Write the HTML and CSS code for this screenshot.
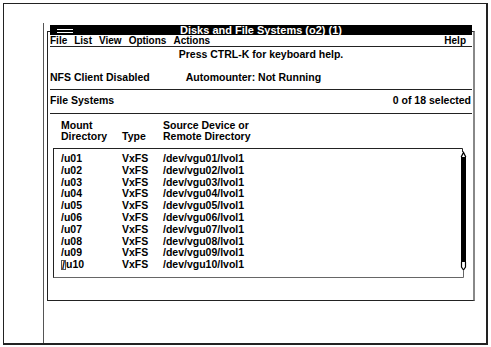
FILE: index.html
```html
<!DOCTYPE html>
<html lang="en">
<head>
  <meta charset="UTF-8">
  <title>Disks and File Systems</title>
  <link rel="stylesheet" href="styles.css">
</head>
<body>
  <div class="screen">
    <div class="panel">
      <div class="titlebar">
        <span class="sysmenu"></span>
        <span class="title">Disks and File Systems (o2) (1)</span>
      </div>
      <div class="window">
        <div class="menubar">
          <span>File</span>
          <span>List</span>
          <span>View</span>
          <span>Options</span>
          <span>Actions</span>
          <span class="menu-help">Help</span>
        </div>
        <div class="hint">Press CTRL-K for keyboard help.</div>
        <div class="status">
          <span>NFS Client Disabled</span>
          <span>Automounter: Not Running</span>
        </div>
        <div class="section-head">
          <span>File Systems</span>
          <span>0 of 18 selected</span>
        </div>
        <div class="columns">
          <span>Mount<br>Directory</span>
          <span class="col-bottom">Type</span>
          <span>Source Device or<br>Remote Directory</span>
        </div>
        <div class="listbox">
          <div class="rows">
            <div class="row"><span>/u01</span><span>VxFS</span><span>/dev/vgu01/lvol1</span></div>
            <div class="row"><span>/u02</span><span>VxFS</span><span>/dev/vgu02/lvol1</span></div>
            <div class="row"><span>/u03</span><span>VxFS</span><span>/dev/vgu03/lvol1</span></div>
            <div class="row"><span>/u04</span><span>VxFS</span><span>/dev/vgu04/lvol1</span></div>
            <div class="row"><span>/u05</span><span>VxFS</span><span>/dev/vgu05/lvol1</span></div>
            <div class="row"><span>/u06</span><span>VxFS</span><span>/dev/vgu06/lvol1</span></div>
            <div class="row"><span>/u07</span><span>VxFS</span><span>/dev/vgu07/lvol1</span></div>
            <div class="row"><span>/u08</span><span>VxFS</span><span>/dev/vgu08/lvol1</span></div>
            <div class="row"><span>/u09</span><span>VxFS</span><span>/dev/vgu09/lvol1</span></div>
            <div class="row"><span><span class="cursor">/</span>u10</span><span>VxFS</span><span>/dev/vgu10/lvol1</span></div>
          </div>
          <svg class="scrollbar" viewBox="0 0 8 130" width="8" height="130">
            <path d="M0 0.5 H2.5 V4" stroke="#222" fill="none"/>
            <path d="M1.2 9 L3.5 4.5 L5.8 9" stroke="#000" stroke-width="1.3" fill="none"/>
            <rect x="1" y="9" width="5" height="105" fill="#000"/>
            <path d="M1.5 114 V119 L3.5 122 L5.5 119 V114" stroke="#000" stroke-width="1.2" fill="none"/>
            <path d="M3.5 122 V129.5 H0" stroke="#666" fill="none"/>
          </svg>
        </div>
      </div>
    </div>
  </div>
</body>
</html>
```

FILE: styles.css
```css
body {
  margin: 0;
  background: #fff;
  color: #000;
  font-family: "Liberation Sans", Arial, sans-serif;
  font-weight: bold;
  font-size: 10.5px;
}

.screen {
  box-sizing: border-box;
  display: flex;
  width: 485px;
  height: 342px;
  margin: 3px 0 0 3px;
  padding: 19px 0 0 39px;
  border: solid #222;
  border-width: 1px 2px 2px 1px;
}

.panel {
  flex: 1;
  padding: 2px 0 0 3px;
  border-left: 1px solid #555;
}

.titlebar {
  position: relative;
  z-index: 1;
  display: grid;
  grid-template-columns: 1fr auto 1fr;
  width: 422px;
  height: 10px;
  margin-left: 3px;
  background: #000;
  color: #fff;
  font-size: 11px;
  line-height: 10px;
}

.sysmenu {
  align-self: start;
  width: 16px;
  height: 2px;
  margin: 4px 0 0 7px;
  border-top: 1px solid #fff;
  border-bottom: 1px solid #fff;
}

.window {
  box-sizing: border-box;
  width: 428px;
  margin-top: -4px;
  padding: 0 1px 22px 2px;
  border: 1px solid #222;
  border-right: 2px solid #888;
}

.menubar {
  display: flex;
  gap: 7px;
  padding-top: 4px;
  font-size: 10px;
  line-height: 10px;
  border-bottom: 1px solid #222;
}

.menu-help {
  margin-left: auto;
  margin-right: 6px;
}

.hint {
  padding-top: 1px;
  text-align: center;
  line-height: 12px;
}

.status {
  display: flex;
  gap: 36px;
  margin-top: 11px;
  padding-bottom: 6px;
  line-height: 12px;
  border-bottom: 1px solid #222;
}

.section-head {
  display: flex;
  justify-content: space-between;
  padding: 4px 1px 7px 0;
  line-height: 12px;
  border-bottom: 1px solid #222;
}

.columns {
  display: grid;
  grid-template-columns: 61px 41px 1fr;
  margin-bottom: 6px;
  padding: 6px 0 0 11px;
  line-height: 11px;
}

.col-bottom {
  align-self: end;
}

.listbox {
  display: flex;
  margin: 0 4px 0 3px;
}

.rows {
  flex: 1;
  padding: 4px 0 6px 7px;
  border: 1px solid #222;
  border-right: 0;
  border-bottom-color: #666;
  line-height: 11.8px;
}

.row {
  display: grid;
  grid-template-columns: 61px 41px 1fr;
}

.cursor {
  display: inline-block;
  width: 5px;
  height: 10px;
  line-height: 10px;
  text-align: center;
  vertical-align: -1px;
  outline: 1px solid #555;
  outline-offset: -1px;
}

.scrollbar {
  flex: none;
  display: block;
}
```
